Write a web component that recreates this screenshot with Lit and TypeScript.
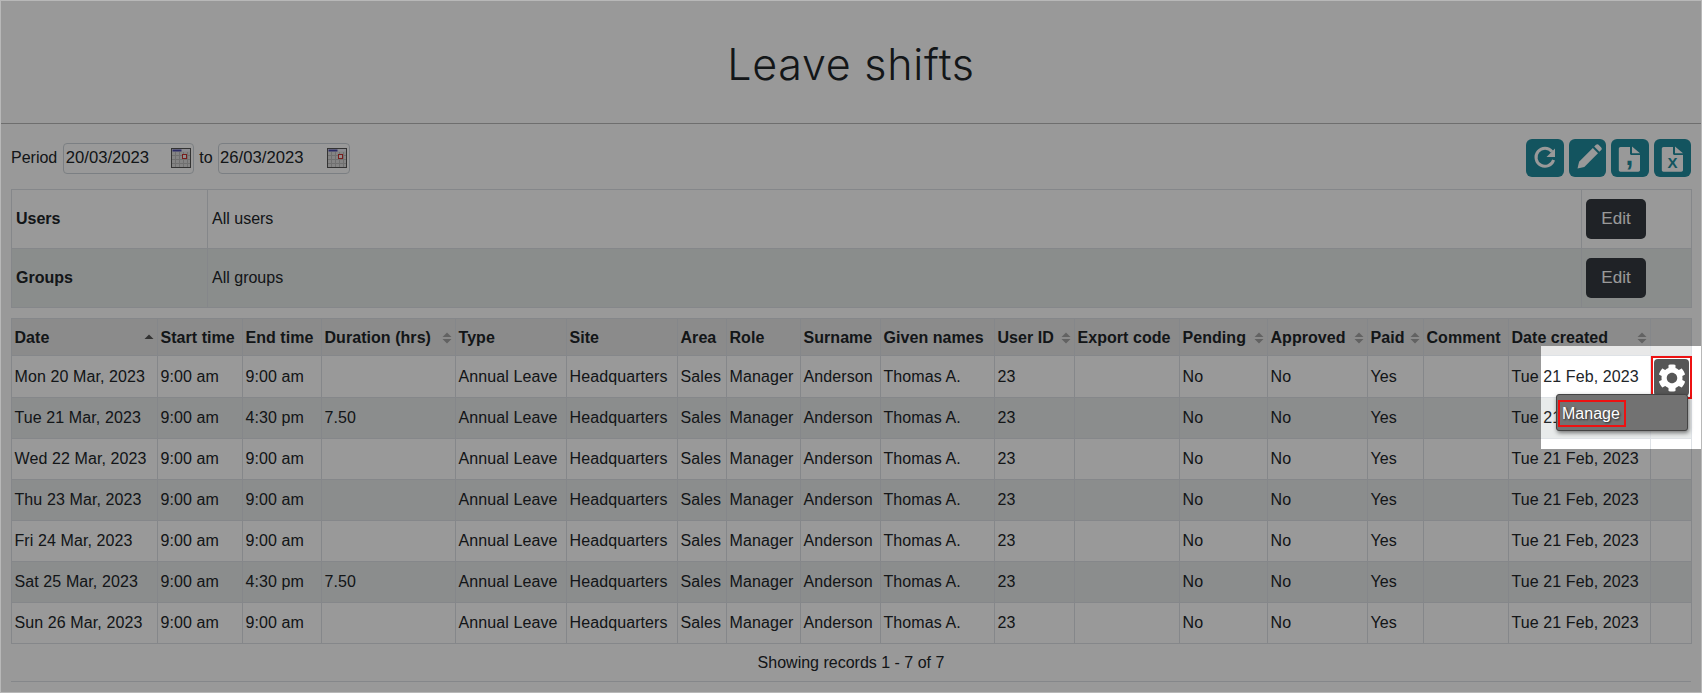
import { LitElement, html, css, svg } from "lit";
import { customElement } from "lit/decorators.js";

const COLS = [146, 85, 79, 134, 111, 111, 49, 74, 80, 114, 80, 105, 88, 100, 56, 85, 142, 41];
type Sort = "" | "both" | "asc";
const HEAD: [string, Sort][] = [
  ["Date", "asc"], ["Start time", ""], ["End time", ""], ["Duration (hrs)", "both"], ["Type", ""], ["Site", ""],
  ["Area", ""], ["Role", ""], ["Surname", ""], ["Given names", ""], ["User ID", "both"], ["Export code", ""],
  ["Pending", "both"], ["Approved", "both"], ["Paid", "both"], ["Comment", ""], ["Date created", "both"], ["", ""],
];
const ROWS: [string, string, string][] = [
  ["Mon 20 Mar, 2023", "9:00 am", ""],
  ["Tue 21 Mar, 2023", "4:30 pm", "7.50"],
  ["Wed 22 Mar, 2023", "9:00 am", ""],
  ["Thu 23 Mar, 2023", "9:00 am", ""],
  ["Fri 24 Mar, 2023", "9:00 am", ""],
  ["Sat 25 Mar, 2023", "4:30 pm", "7.50"],
  ["Sun 26 Mar, 2023", "9:00 am", ""],
];

const GEAR = "M487.4 315.7l-42.6-24.6c4.3-23.2 4.3-47 0-70.2l42.6-24.6c4.9-2.8 7.1-8.6 5.5-14-11.1-35.6-30-67.8-54.7-94.6-3.8-4.1-10-5.1-14.8-2.3L380.8 110c-17.9-15.4-38.5-27.3-60.8-35.1V25.8c0-5.6-3.9-10.5-9.4-11.7-36.7-8.2-74.3-7.8-109.2 0-5.5 1.2-9.4 6.1-9.4 11.7V75c-22.2 7.9-42.8 19.8-60.8 35.1L88.7 85.5c-4.9-2.8-11-1.9-14.8 2.3-24.7 26.7-43.6 58.9-54.7 94.6-1.7 5.4.6 11.2 5.5 14L67.3 221c-4.3 23.2-4.3 47 0 70.2l-42.6 24.6c-4.9 2.8-7.1 8.6-5.5 14 11.1 35.6 30 67.8 54.7 94.6 3.8 4.1 10 5.1 14.8 2.3l42.6-24.6c17.9 15.4 38.5 27.3 60.8 35.1v49.2c0 5.6 3.9 10.5 9.4 11.7 36.7 8.2 74.3 7.8 109.2 0 5.5-1.2 9.4-6.1 9.4-11.7v-49.2c22.2-7.9 42.8-19.8 60.8-35.1l42.6 24.6c4.9 2.8 11 1.9 14.8-2.3 24.7-26.7 43.6-58.9 54.7-94.6 1.5-5.5-.7-11.3-5.6-14.1zM256 352c-53 0-96-43-96-96s43-96 96-96 96 43 96 96-43 96-96 96z";

const calendar = html`<svg class="cal" width="20" height="20" viewBox="0 0 20 20">
  <rect x="0.5" y="0.5" width="19" height="19" fill="#dcdcdc" stroke="#555"></rect>
  <rect x="1" y="1" width="18" height="2.5" fill="#e8e8f0"></rect>
  <rect x="1.5" y="1.5" width="9" height="2" fill="#4848a8"></rect>
  <path d="M4.5 4v15M8.5 4v15M12.5 4v15M16.5 4v15M1 7.5h18M1 11.5h18M1 15.5h18" stroke="#bbb" stroke-width="1" fill="none"></path>
  <rect x="11.5" y="6.5" width="4" height="4" fill="#eee" stroke="#c83030"></rect>
</svg>`;

const sortIcon = (s: Sort) =>
  s === "both"
    ? html`<svg class="sort" width="10" height="12" viewBox="0 0 10 12"><path d="M5 0.5L9.5 5H0.5zM5 11.5L0.5 7h9z" fill="#a4a4a4"></path></svg>`
    : s === "asc"
    ? html`<svg class="sort" width="10" height="12" viewBox="0 0 10 12"><path d="M5 2.5L9.5 7H0.5z" fill="#555"></path></svg>`
    : "";

const fileShape = svg`<path d="M9.5 8H19v6.5c0 .8.7 1.5 1.5 1.5H29v15c0 1-.8 1.7-1.7 1.7H9.5c-1 0-1.7-.8-1.7-1.7V9.7C7.8 8.8 8.6 8 9.5 8zM21 7.6 29 14.2h-8z" fill="#fff"></path>`;

@customElement("app-root")
export class AppRoot extends LitElement {
  static styles = css`
    :host {
      display: block;
      width: 1702px;
      height: 693px;
      overflow: hidden;
      font: 16px/24px "Liberation Sans", Arial, sans-serif;
      color: #212529;
      background: #fff;
    }
    * { box-sizing: border-box; }
    .page { position: relative; height: 693px; border: 1px solid #b8b8b8; overflow: hidden; }
    .head {
      height: 123px;
      border-bottom: 1px solid #b8b8b8;
      display: flex;
      align-items: center;
      justify-content: center;
      padding-top: 4px;
    }
    h1 {
      margin: 0;
      font: 300 43px/52px Inter, "Open Sans", sans-serif;
      letter-spacing: 0.75px;
      color: #212529;
    }
    .content { padding: 15px 10px 0; }
    .toolbar { display: flex; align-items: center; gap: 5px; }
    .date {
      width: 131px;
      height: 31px;
      border: 1px solid #ced4da;
      border-radius: 4px;
      display: flex;
      align-items: center;
      justify-content: space-between;
      padding: 0 2px 0 1.5px;
      font-size: 16.67px;
    }
    .first { margin-left: 1px; }
    .second { width: 132px; }
    .spacer { flex: 1; }
    .btn {
      width: 37.5px;
      height: 38px;
      border-radius: 6px;
      background: #208c9e;
      display: block;
    }
    table { border-collapse: collapse; table-layout: fixed; width: 1680px; }
    td, th { border: 1px solid #dee2e6; padding: 0 3px 0 2.5px; text-align: left; vertical-align: middle; white-space: nowrap; }
    .filter { margin-top: 12px; }
    .filter td { height: 59px; padding: 0 4px; }
    .filter tr:nth-child(even) td { background: #e7ebea; }
    .edit {
      display: block;
      width: 60px;
      height: 40px;
      border: 0;
      border-radius: 5px;
      background: #343a40;
      color: #fff;
      font: 17px "Liberation Sans", Arial, sans-serif;
    }
    .list { margin-top: 10px; }
    .list th { height: 37px; font-weight: 700; background: #e8e8e8; letter-spacing: 0.05px; }
    .list td { height: 41px; letter-spacing: 0.1px; }
    .list tbody tr:nth-child(even) td { background: #e8ebeb; }
    .th { display: flex; align-items: center; justify-content: space-between; padding-top: 1px; }
    .sort { flex: none; }
    .list .action { position: relative; padding: 0; overflow: visible; }
    .frame {
      width: 41px;
      height: 43px;
      margin: 0 0 -2px;
      border: 2px solid #ee1111;
      padding: 1px;
    }
    .gear {
      display: flex;
      align-items: center;
      justify-content: center;
      width: 35px;
      height: 37px;
      border-radius: 4px;
      background: #565656;
    }
    .menu {
      position: absolute;
      z-index: 3;
      left: -95px;
      top: 38px;
      width: 132px;
      height: 37px;
      border: 1px solid #444;
      border-radius: 3px;
      background: #727272;
      box-shadow: 1px 2px 4px rgba(0, 0, 0, 0.5);
      padding: 5px 0 0 1px;
    }
    .manage {
      display: block;
      width: 68px;
      height: 27px;
      border: 2px solid #ee1111;
      padding: 0 0 0 2px;
      color: #fff;
      line-height: 23px;
      letter-spacing: 0;
      text-shadow: 1px 1px 2px rgba(0, 0, 0, 0.7);
    }
    .foot {
      height: 38px;
      display: flex;
      align-items: center;
      justify-content: center;
      border-bottom: 1px solid #dee2e6;
    }
    .spot {
      position: absolute;
      z-index: 2;
      left: 1540px;
      top: 345px;
      width: 161px;
      height: 103px;
      box-shadow: 0 0 0 3000px rgba(0, 0, 0, 0.4);
      pointer-events: none;
    }
  `;

  render() {
    return html`<div class="page">
      <div class="head"><h1>Leave shifts</h1></div>
      <div class="content">
        <div class="toolbar">
          <span>Period</span>
          <div class="date first"><span>20/03/2023</span>${calendar}</div>
          <span>to</span>
          <div class="date second"><span>26/03/2023</span>${calendar}</div>
          <div class="spacer"></div>
          <svg class="btn" viewBox="0 0 37.5 38">
            <path d="M26 12.6A9 9 0 1 0 27.6 21" fill="none" stroke="#fff" stroke-width="3"></path>
            <path d="M29 9.5V18h-8.5z" fill="#fff"></path>
          </svg>
          <svg class="btn" viewBox="0 0 37.5 38">
            <path d="M8.5 29.5l1.6-6.8L23.8 9l5.2 5.2L15.3 28z" fill="#fff"></path>
            <path d="M25.2 7.6l1.8-1.8c.8-.8 1.9-.8 2.6 0l2.6 2.6c.8.8.8 1.9 0 2.6l-1.8 1.8z" fill="#fff"></path>
          </svg>
          <svg class="btn" viewBox="0 0 37.5 38">
            ${fileShape}
            <text x="18.5" y="26" text-anchor="middle" font-family="Liberation Sans" font-weight="700" font-size="28" fill="#208c9e">,</text>
          </svg>
          <svg class="btn" viewBox="0 0 37.5 38">
            ${fileShape}
            <text x="18.5" y="29" text-anchor="middle" font-family="Liberation Sans" font-weight="700" font-size="15" fill="#208c9e">X</text>
          </svg>
        </div>

        <table class="filter">
          <colgroup><col style="width:196px" /><col style="width:1374px" /><col style="width:110px" /></colgroup>
          <tbody>
            <tr><td><b>Users</b></td><td>All users</td><td><button class="edit">Edit</button></td></tr>
            <tr><td><b>Groups</b></td><td>All groups</td><td><button class="edit">Edit</button></td></tr>
          </tbody>
        </table>

        <table class="list">
          <colgroup>${COLS.map((w) => html`<col style="width:${w}px" />`)}</colgroup>
          <thead>
            <tr>${HEAD.map(([t, s]) => html`<th><div class="th"><span>${t}</span>${sortIcon(s)}</div></th>`)}</tr>
          </thead>
          <tbody>
            ${ROWS.map(
              ([d, end, dur], i) => html`<tr>
                <td>${d}</td><td>9:00 am</td><td>${end}</td><td>${dur}</td>
                <td>Annual Leave</td><td>Headquarters</td><td>Sales</td><td>Manager</td><td>Anderson</td><td>Thomas A.</td>
                <td>23</td><td></td><td>No</td><td>No</td><td>Yes</td><td></td><td>Tue 21 Feb, 2023</td>
                ${i === 0
                  ? html`<td class="action">
                      <div class="frame"><div class="gear"><svg width="28" height="28" viewBox="0 0 512 512"><path d="${GEAR}" fill="#fff"></path></svg></div></div>
                      <div class="menu"><span class="manage">Manage</span></div>
                    </td>`
                  : html`<td></td>`}
              </tr>`
            )}
          </tbody>
        </table>
        <div class="foot">Showing records 1 - 7 of 7</div>
      </div>
      <div class="spot"></div>
    </div>`;
  }
}
